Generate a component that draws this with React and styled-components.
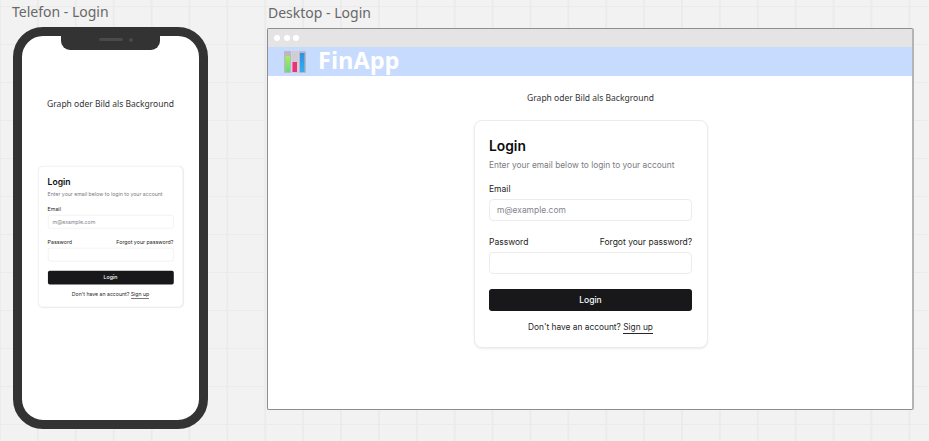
import React from "react";
import styled, { createGlobalStyle } from "styled-components";

const GlobalStyle = createGlobalStyle`
  html, body {
    margin: 0;
    padding: 0;
    overflow: hidden;
  }
  #root {
    width: 929px;
    height: 441px;
  }
`;

const LoginCard = () => (
  <Card>
    <Title>Login</Title>
    <Subtitle>Enter your email below to login to your account</Subtitle>
    <Field>
      <FieldLabel>Email</FieldLabel>
      <Input>m@example.com</Input>
    </Field>
    <Field>
      <LabelRow>
        <FieldLabel>Password</FieldLabel>
        <FieldLabel>Forgot your password?</FieldLabel>
      </LabelRow>
      <Input />
    </Field>
    <LoginButton>Login</LoginButton>
    <SignUp>
      Don't have an account? <SignUpLink>Sign up</SignUpLink>
    </SignUp>
  </Card>
);

const BarsLogo = () => (
  <svg width="22" height="22" viewBox="0 0 22 22">
    <defs>
      <linearGradient id="greenBar" x1="0" y1="0" x2="0" y2="1">
        <stop offset="0" stopColor="#a8ee5a" />
        <stop offset="1" stopColor="#63dc7c" />
      </linearGradient>
      <linearGradient id="blueBar" x1="0" y1="0" x2="0" y2="1">
        <stop offset="0" stopColor="#2f8fe6" />
        <stop offset="1" stopColor="#35aef0" />
      </linearGradient>
    </defs>
    <rect x="0" y="0" width="7" height="22" rx="1" fill="#bdb7c0" />
    <rect x="7.5" y="0" width="7" height="22" rx="1" fill="#d2cdd4" />
    <rect x="15" y="0" width="7" height="22" rx="1" fill="#bdb7c0" />
    <rect x="1.5" y="5" width="4.5" height="16" fill="url(#greenBar)" />
    <rect x="8.5" y="11" width="4.5" height="10" fill="#ee2f79" />
    <rect x="16" y="2" width="4.5" height="19" fill="url(#blueBar)" />
  </svg>
);

export default function App() {
  return (
    <Board>
      <GlobalStyle />
      <FrameLabel $left={12} $top={2}>Telefon - Login</FrameLabel>
      <Phone>
        <Notch>
          <Speaker />
          <Camera />
        </Notch>
        <FrameHint $top={61}>Graph oder Bild als Background</FrameHint>
      </Phone>
      <PhoneCardSlot>
        <LoginCard />
      </PhoneCardSlot>

      <FrameLabel $left={268} $top={3}>Desktop - Login</FrameLabel>
      <BrowserWindow>
        <TitleBar>
          <Dot />
          <Dot />
          <Dot />
        </TitleBar>
        <Brand>
          <BarsLogo />
          <BrandName>FinApp</BrandName>
        </Brand>
        <DesktopBody>
          <FrameHint $top={0}>Graph oder Bild als Background</FrameHint>
          <LoginCard />
        </DesktopBody>
      </BrowserWindow>
    </Board>
  );
}

const Board = styled.div`
  position: relative;
  width: 929px;
  height: 441px;
  overflow: hidden;
  background-color: #f2f2f2;
  background-image:
    linear-gradient(to right, #ebebeb 1.5px, transparent 1.5px),
    linear-gradient(to bottom, #ebebeb 1.5px, transparent 1.5px);
  background-size: 37.9px 38px;
  background-position: -1px 6px;
`;

const FrameLabel = styled.div`
  position: absolute;
  left: ${(props) => props.$left}px;
  top: ${(props) => props.$top}px;
  font-family: "Noto Sans", sans-serif;
  font-size: 14px;
  line-height: 19px;
  color: #686868;
`;

const Phone = styled.div`
  position: absolute;
  left: 13px;
  top: 27px;
  width: 177px;
  height: 384px;
  border: 9.5px solid #333333;
  border-radius: 30px;
  background: #ffffff;
`;

const Notch = styled.div`
  position: absolute;
  left: 38.5px;
  top: -1px;
  width: 99px;
  height: 15px;
  display: flex;
  align-items: center;
  justify-content: center;
  gap: 6px;
  padding-left: 12px;
  padding-bottom: 6px;
  box-sizing: border-box;
  background: #333333;
  border-radius: 0 0 9px 9px;
`;

const Speaker = styled.div`
  width: 24px;
  height: 2.5px;
  border-radius: 2px;
  background: #4a4a4a;
`;

const Camera = styled.div`
  width: 4px;
  height: 4px;
  border-radius: 50%;
  background: #4a4a4a;
`;

const FrameHint = styled.div`
  margin-top: ${(props) => props.$top}px;
  text-align: center;
  font-family: "Noto Sans", sans-serif;
  font-size: 8.5px;
  line-height: 13px;
  color: #333333;
`;

const PhoneCardSlot = styled.div`
  position: absolute;
  left: 38px;
  top: 166px;
  width: 234px;
  transform: scale(0.62);
  transform-origin: top left;
`;

const BrowserWindow = styled.div`
  position: absolute;
  left: 267px;
  top: 28px;
  width: 644px;
  height: 380px;
  display: flex;
  flex-direction: column;
  background: #ffffff;
  border: 1px solid #8e8e8e;
  border-right: 2px solid #b4b4b4;
  border-radius: 2px;
`;

const TitleBar = styled.div`
  height: 18px;
  display: flex;
  align-items: center;
  gap: 3.5px;
  padding-left: 6px;
  background: #e4e4e4;
`;

const Dot = styled.div`
  width: 6px;
  height: 6px;
  border-radius: 50%;
  background: #ffffff;
`;

const Brand = styled.div`
  height: 29px;
  display: flex;
  align-items: center;
  gap: 12px;
  padding-left: 16px;
  background: #c6dbfd;
`;

const BrandName = styled.div`
  margin-top: -2px;
  font-family: "Open Sans", "Noto Sans", sans-serif;
  font-size: 23.5px;
  font-weight: 700;
  line-height: 29px;
  color: #ffffff;
`;

const DesktopBody = styled.div`
  flex: 1;
  display: flex;
  flex-direction: column;
  align-items: center;
  gap: 16px;
  padding: 15px 0 0 1px;
`;

const Card = styled.div`
  width: 234px;
  height: 228px;
  flex-shrink: 0;
  box-sizing: border-box;
  padding: 15px 14.5px 14px;
  display: flex;
  flex-direction: column;
  background: #ffffff;
  border: 1px solid #ececec;
  border-radius: 8px;
  box-shadow: 0 1px 2px rgba(0, 0, 0, 0.08);
  font-family: Inter, sans-serif;
  color: #18181b;
`;

const Title = styled.div`
  font-size: 13.8px;
  font-weight: 600;
  line-height: 20px;
  color: #0c0c0e;
`;

const Subtitle = styled.div`
  margin-top: 3px;
  font-size: 8.35px;
  line-height: 13px;
  color: #7b7b82;
`;

const Field = styled.div`
  margin-top: 11px;
  display: flex;
  flex-direction: column;
  gap: 3px;

  & + & {
    margin-top: 15px;
  }
`;

const LabelRow = styled.div`
  display: flex;
  justify-content: space-between;
`;

const FieldLabel = styled.div`
  font-size: 8.5px;
  font-weight: 400;
  line-height: 13px;
  color: #1d1d20;
`;

const Input = styled.div`
  height: 22px;
  box-sizing: border-box;
  display: flex;
  align-items: center;
  padding-left: 7px;
  border: 1px solid #ececec;
  border-radius: 4px;
  font-size: 8.45px;
  color: #85858c;
`;

const LoginButton = styled.div`
  margin-top: 15px;
  height: 22px;
  flex-shrink: 0;
  display: flex;
  align-items: center;
  justify-content: center;
  border-radius: 3px;
  background: #18181b;
  font-size: 8.5px;
  font-weight: 500;
  color: #fafafa;
`;

const SignUp = styled.div`
  margin-top: 10px;
  text-align: center;
  font-size: 8.35px;
  line-height: 13px;
  color: #27272a;
`;

const SignUpLink = styled.span`
  padding-bottom: 1px;
  border-bottom: 1px solid #27272a;
`;
